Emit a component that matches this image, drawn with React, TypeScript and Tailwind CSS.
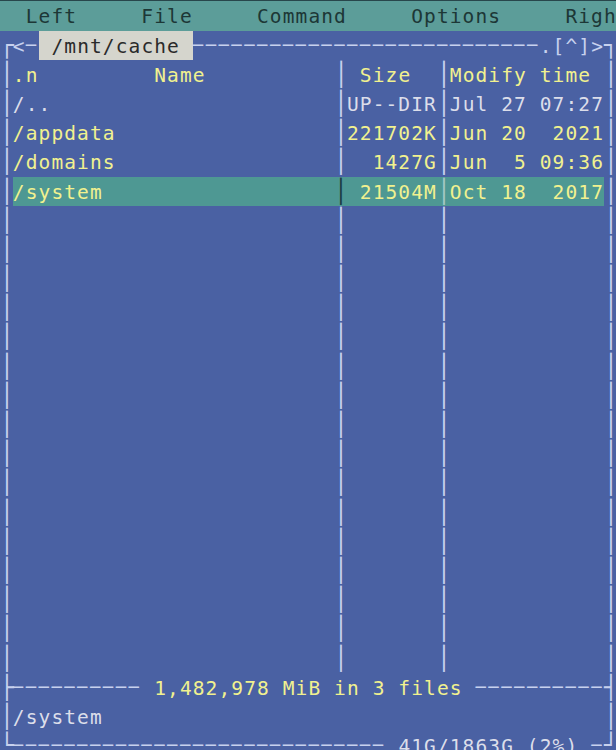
import React from "react";

type Seg = { t: string; c?: string; bg?: string };

const FRAME = "text-[#c7d1ee]";
const YEL = "text-[#f1f18f]";
const WHT = "text-[#dcdeea]";
const SEL = "bg-[#4e9893]";

const HLINE = "─";
const VCHARS = "│┌┐└┘├┤";

// Box-drawing characters get their own sizes so the cell advance stays
// 12.85px: horizontals are drawn a bit narrower (dashed look), verticals taller.
function Glyphs({ text }: { text: string }) {
  const runs: { kind: "h" | "v" | "t"; s: string }[] = [];
  for (const ch of text) {
    const kind = ch === HLINE ? "h" : VCHARS.includes(ch) ? "v" : "t";
    const last = runs[runs.length - 1];
    if (last && last.kind === kind) last.s += ch;
    else runs.push({ kind, s: ch });
  }
  return (
    <>
      {runs.map((r, i) =>
        r.kind === "h" ? (
          <span key={i} className="text-[17px] tracking-[2.615px] leading-none align-[2px]">
            {r.s}
          </span>
        ) : r.kind === "v" ? (
          <span key={i} className="text-[23px] tracking-[-0.997px] leading-none">
            {r.s}
          </span>
        ) : (
          <React.Fragment key={i}>{r.s}</React.Fragment>
        )
      )}
    </>
  );
}

function Row({ segs, className = "" }: { segs: Seg[]; className?: string }) {
  return (
    <div className={`flex h-[29.2px] shrink-0 leading-[32px] whitespace-pre ${className}`}>
      {segs.map((s, i) => (
        <span key={i} className={`${s.c ?? ""} ${s.bg ?? ""}`}>
          <Glyphs text={s.t} />
        </span>
      ))}
    </div>
  );
}

type FileEntry = { name: string; size: string; date: string; color: string };

const files: FileEntry[] = [
  { name: "/..", size: "UP--DIR", date: "Jul 27 07:27", color: WHT },
  { name: "/appdata", size: "221702K", date: "Jun 20  2021", color: YEL },
  { name: "/domains", size: "1427G", date: "Jun  5 09:36", color: YEL },
  { name: "/system", size: "21504M", date: "Oct 18  2017", color: YEL },
];

const selectedIndex = 3;

function fileRow(f: FileEntry, selected: boolean): Seg[] {
  const bg = selected ? SEL : "";
  return [
    { t: "│", c: FRAME },
    { t: f.name.padEnd(25), c: f.color, bg },
    { t: "│", c: selected ? "text-[#1c3d44]" : FRAME, bg },
    { t: f.size.padStart(7), c: f.color, bg },
    { t: "│", c: selected ? "text-[#a3c8c5]" : FRAME, bg },
    { t: f.date.padEnd(12), c: f.color, bg },
    { t: "│", c: FRAME },
  ];
}

const emptyRow: Seg[] = [
  { t: "│", c: FRAME },
  { t: " ".repeat(25) },
  { t: "│", c: FRAME },
  { t: " ".repeat(7) },
  { t: "│", c: FRAME },
  { t: " ".repeat(12) },
  { t: "│", c: FRAME },
];

export default function App() {
  return (
    <div className="h-[750px] w-[616px] overflow-hidden bg-[#4a61a3] font-['DejaVu_Sans_Mono',monospace] text-[19.5px] tracking-[1.11px]">
      <div className="h-[1.4px] bg-[#28464b]" />

      {/* menu bar */}
      <Row
        className="bg-[#5c9d99] text-[#1d3736]"
        segs={[{ t: "  Left     File     Command     Options     Right" }]}
      />

      {/* panel title */}
      <Row
        segs={[
          { t: "┌<─", c: FRAME },
          { t: " /mnt/cache ", c: "text-[#2a2a2a]", bg: "bg-[#d5d5cd]" },
          { t: HLINE.repeat(27) + ".[^]>┐", c: FRAME },
        ]}
      />

      {/* column header */}
      <Row
        segs={[
          { t: "│", c: FRAME },
          { t: ".n", c: YEL },
          { t: " ".repeat(9) },
          { t: "Name", c: YEL },
          { t: " ".repeat(10) },
          { t: "│", c: FRAME },
          { t: " Size  ", c: YEL },
          { t: "│", c: FRAME },
          { t: "Modify time ", c: YEL },
          { t: "│", c: FRAME },
        ]}
      />

      {files.map((f, i) => (
        <Row key={f.name} segs={fileRow(f, i === selectedIndex)} />
      ))}

      {Array.from({ length: 16 }).map((_, i) => (
        <Row key={`e${i}`} segs={emptyRow} />
      ))}

      {/* mini status separator */}
      <Row
        segs={[
          { t: "├" + HLINE.repeat(10) + " ", c: FRAME },
          { t: "1,482,978 MiB in 3 files", c: YEL },
          { t: " " + HLINE.repeat(10) + "┤", c: FRAME },
        ]}
      />

      <Row
        segs={[
          { t: "│", c: FRAME },
          { t: "/system".padEnd(46), c: WHT },
          { t: "│", c: FRAME },
        ]}
      />

      <Row
        segs={[
          { t: "└" + HLINE.repeat(29) + " ", c: FRAME },
          { t: "41G/1863G (2%)", c: WHT },
          { t: " " + HLINE + "┘", c: FRAME },
        ]}
      />
    </div>
  );
}
